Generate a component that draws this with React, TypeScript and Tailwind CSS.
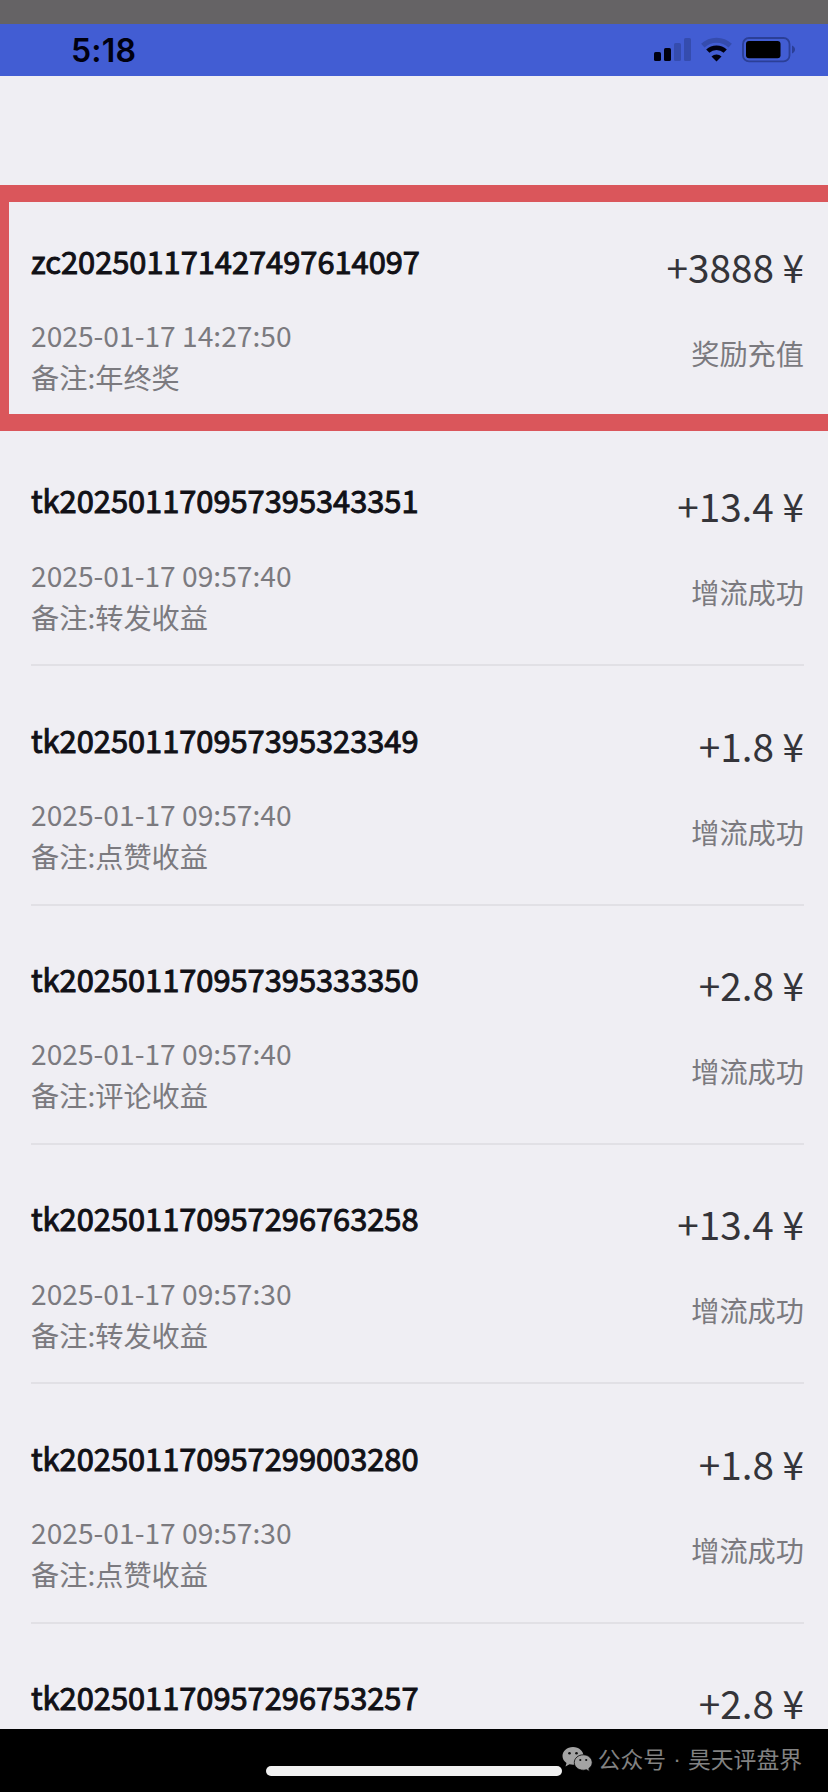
type Item = {
  id: string;
  amount: string;
  time?: string;
  note?: string;
  status?: string;
};

const items: Item[] = [
  { id: "zc202501171427497614097", time: "2025-01-17 14:27:50", note: "年终奖", amount: "+3888", status: "奖励充值" },
  { id: "tk202501170957395343351", time: "2025-01-17 09:57:40", note: "转发收益", amount: "+13.4", status: "增流成功" },
  { id: "tk202501170957395323349", time: "2025-01-17 09:57:40", note: "点赞收益", amount: "+1.8", status: "增流成功" },
  { id: "tk202501170957395333350", time: "2025-01-17 09:57:40", note: "评论收益", amount: "+2.8", status: "增流成功" },
  { id: "tk202501170957296763258", time: "2025-01-17 09:57:30", note: "转发收益", amount: "+13.4", status: "增流成功" },
  { id: "tk202501170957299003280", time: "2025-01-17 09:57:30", note: "点赞收益", amount: "+1.8", status: "增流成功" },
  { id: "tk202501170957296753257", amount: "+2.8" },
];

function StatusIcons() {
  return (
    <svg width="144" height="26" viewBox="0 0 144 26" className="block">
      {/* signal */}
      <rect x="3" y="15" width="7" height="9" rx="1.6" fill="#000010" />
      <rect x="13" y="11" width="7" height="13" rx="1.6" fill="#000010" />
      <rect x="23" y="6" width="7" height="18" rx="1.6" fill="#354cae" />
      <rect x="33" y="1" width="7" height="23" rx="1.6" fill="#354cae" />
      {/* wifi */}
      <path d="M51.8 8.6a20 20 0 0 1 27.4 0" fill="none" stroke="#354cae" strokeWidth="5" />
      <path d="M56.8 14.2a12.5 12.5 0 0 1 17.4 0" fill="none" stroke="#000010" strokeWidth="4.6" />
      <path d="M65.5 24.4l-5-5a7.5 7.5 0 0 1 10 0z" fill="#000010" />
      {/* battery */}
      <rect x="92" y="1" width="46.5" height="23.4" rx="6" fill="none" stroke="#2b3f97" strokeWidth="1.8" />
      <rect x="95" y="4" width="34.5" height="17.2" rx="3" fill="#000" />
      <path d="M141 8.6c4 1.6 4 6.4 0 8z" fill="#2b3f97" />
    </svg>
  );
}

function WechatIcon() {
  return (
    <svg width="31" height="26" viewBox="0 0 31 26" className="block shrink-0">
      <path
        d="M11 1C5 1 .5 5 .5 10c0 3 1.5 5.3 4 7l-1 3.5 4-2.2c1.2.3 2.3.5 3.5.5C17 18.8 21.5 15 21.5 10S17 1 11 1z"
        fill="#a3a3a3"
      />
      <circle cx="7.5" cy="7.3" r="1.3" fill="#111" />
      <circle cx="14.5" cy="7.3" r="1.3" fill="#111" />
      <path
        d="M21.3 8.8c-5 0-9 3.4-9 7.700s4 7.700 9 7.700c1.100 0 2.200-.2 3.100-.5l3.200 1.800-.8-3c2.100-1.400 3.400-3.500 3.400-6 0-4.300-3.900-7.700-8.900-7.700z"
        fill="#a3a3a3"
        stroke="#000"
        strokeWidth=".8"
      />
      <circle cx="18.3" cy="14" r="1.1" fill="#111" />
      <circle cx="24.2" cy="14" r="1.1" fill="#111" />
    </svg>
  );
}

function Row({ item, divider }: { item: Item; divider: boolean }) {
  return (
    <li
      className={
        divider
          ? "flex h-[239.35px] shrink-0 justify-between border-b-2 border-[#e1e0e5]"
          : "flex h-[239.35px] shrink-0 justify-between"
      }
    >
      <div className="pt-[51.6px]">
        <p className="text-[30.8px] leading-[44px] text-[#111116] [-webkit-text-stroke:1px_#111116]">{item.id}</p>
        {item.time && (
          <div className="mt-[31.2px] text-[28.2px] leading-[41px] text-[#7b7a7f]">
            <p>{item.time}</p>
            <p className="mt-px">备注:{item.note}</p>
          </div>
        )}
      </div>
      <div className="pt-[50.6px] text-right">
        <p className="text-[38.7px] leading-[56px] text-[#343439]">{item.amount} ¥</p>
        {item.status && <p className="mt-[38px] text-[28.2px] leading-[41px] text-[#7b7a7f]">{item.status}</p>}
      </div>
    </li>
  );
}

export default function App() {
  return (
    <div className="flex h-[1792px] w-[828px] flex-col overflow-hidden bg-[#efeef3] font-['Noto_Sans_CJK_SC',sans-serif]">
      <div className="h-6 shrink-0 bg-[#656365]" />
      <header className="flex h-[52px] shrink-0 items-center justify-between bg-[#425dd3] pr-[33px] pl-[71px]">
        <span className="pt-px font-['Inter',sans-serif] text-[32px] leading-none font-semibold tracking-[0.2px] text-[#000010]">
          5:18
        </span>
        <StatusIcons />
      </header>

      <main className="relative min-h-0 flex-1 overflow-hidden pt-[111.5px]">
        <ul className="flex flex-col pr-[24px] pl-[31px]">
          {items.map((item, i) => (
            <Row key={item.id} item={item} divider={i > 0} />
          ))}
        </ul>
        {/* highlight over the first record */}
        <div className="absolute top-[109px] right-0 left-0 h-[246px] border-y-[17px] border-l-[9px] border-[#da565b]" />
      </main>

      <footer className="relative flex h-[63px] shrink-0 justify-end bg-black pr-[26px]">
        <div className="absolute top-[37px] left-[266px] h-[10px] w-[296px] rounded-full bg-[#f1f1f1]" />
        <div className="relative flex h-[60px] items-center text-[22.8px] text-[#828282]">
          <WechatIcon />
          <span className="ml-[5px]">公众号</span>
          <span className="w-[22px] text-center font-['Liberation_Sans',sans-serif]">·</span>
          <span>昊天评盘界</span>
        </div>
      </footer>
    </div>
  );
}
